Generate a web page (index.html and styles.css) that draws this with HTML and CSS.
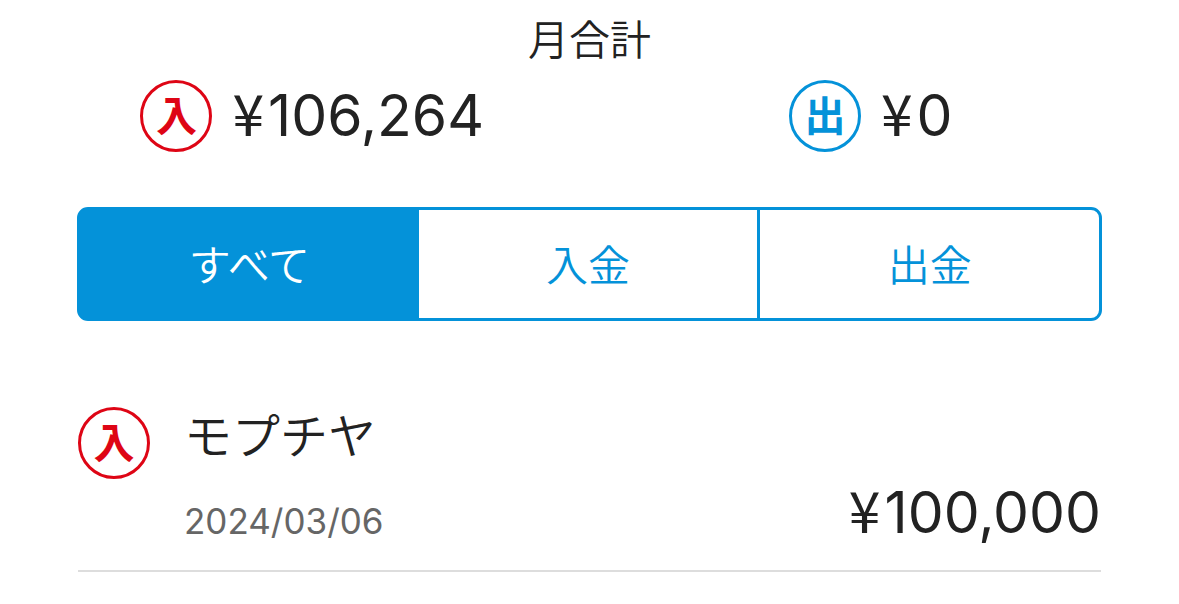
FILE: index.html
```html
<!DOCTYPE html>
<html lang="ja">
<head>
<meta charset="utf-8">
<meta name="viewport" content="width=device-width, initial-scale=1">
<title>入出金明細</title>
<link rel="stylesheet" href="styles.css">
</head>
<body>
<main class="page">
  <section class="summary">
    <h1 class="summary-title">月合計</h1>
    <div class="totals">
      <div class="total"><span class="badge badge-in">入</span><span class="amount"><span class="yen">¥</span>106,264</span></div>
      <div class="total"><span class="badge badge-out">出</span><span class="amount"><span class="yen">¥</span>0</span></div>
    </div>
  </section>
  <nav class="tabs">
    <button class="tab tab-active" type="button" aria-pressed="true">すべて</button>
    <button class="tab" type="button" aria-pressed="false">入金</button>
    <button class="tab" type="button" aria-pressed="false">出金</button>
  </nav>
  <ul class="entries">
    <li class="entry">
      <span class="badge badge-in">入</span>
      <div class="entry-info">
        <span class="entry-name">モプチヤ</span>
        <time class="entry-date" datetime="2024-03-06">2024/03/06</time>
      </div>
      <span class="amount entry-amount"><span class="yen">¥</span>100,000</span>
    </li>
  </ul>
</main>
</body>
</html>
```

FILE: styles.css
```css
* {
  box-sizing: border-box;
}

body {
  margin: 0;
  background: #fff;
  color: #222;
  font-family: Inter, "Noto Sans CJK JP", sans-serif;
}

.page {
  padding: 16px 77px 32px;
}

.summary-title {
  margin: 0;
  font-size: 41px;
  font-weight: 350;
  line-height: 48px;
  text-align: center;
}

.totals {
  display: grid;
  grid-template-columns: 1fr 1fr;
  margin: 15px -48px 0 -44px;
}

.total {
  display: flex;
  align-items: center;
  justify-content: center;
  gap: 20px;
}

.badge {
  display: flex;
  flex: none;
  align-items: center;
  justify-content: center;
  width: 72px;
  height: 72px;
  border: 3px solid;
  border-radius: 50%;
  font-size: 41px;
  font-weight: 700;
  line-height: 48px;
}

.badge-in {
  color: #de0515;
}

.badge-out {
  color: #0492d9;
}

.amount {
  display: flex;
  align-items: baseline;
  gap: 4px;
  padding-bottom: 4px;
  font-size: 57px;
  line-height: 64px;
}

.yen {
  font-family: "Noto Sans CJK JP", sans-serif;
}

.tabs {
  display: flex;
  margin-top: 55px;
  border: 3px solid #0492d9;
  border-radius: 11px;
}

.tab {
  flex: 1;
  height: 108px;
  padding: 0 0 4px;
  border: 0;
  background: transparent;
  color: #0492d9;
  font: inherit;
  font-size: 42px;
  font-weight: 350;
}

.tab:last-child {
  border-left: 3px solid #0492d9;
}

.tab-active {
  border-radius: 4px 0 0 4px;
  background: #0492d9;
  color: #fff;
}

.entries {
  margin: 86px 1px 0;
  padding: 0;
  list-style: none;
}

.entry {
  display: flex;
  align-items: flex-start;
  padding-bottom: 25px;
  border-bottom: 2px solid #ddd;
}

.entry-info {
  display: flex;
  flex: 1;
  flex-direction: column;
  gap: 32px;
  margin-left: 34px;
  padding-top: 2px;
}

.entry-name {
  font-size: 48px;
  font-weight: 350;
  line-height: 56px;
}

.entry-date {
  color: #666;
  font-size: 35px;
  line-height: 48px;
}

.entry-amount {
  align-self: flex-end;
  padding-bottom: 0;
}
```
